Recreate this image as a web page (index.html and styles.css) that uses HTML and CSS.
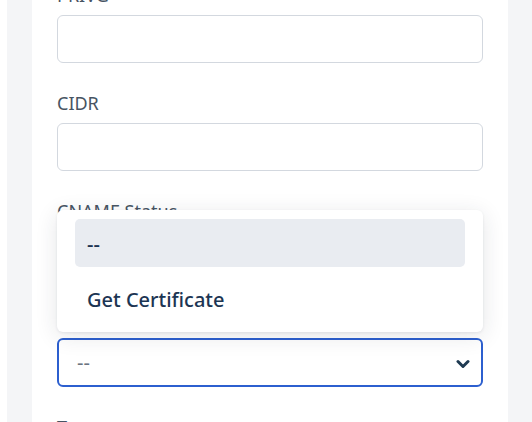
FILE: index.html
```html
<!DOCTYPE html>
<html>
<head>
<meta charset="utf-8">
<link rel="stylesheet" href="styles.css">
</head>
<body>
<div class="page">
  <div class="card">
    <form class="form">
      <div class="field">
        <label class="label">PRIVG</label>
        <div class="input"></div>
      </div>
      <div class="field">
        <label class="label">CIDR</label>
        <div class="input"></div>
      </div>
      <div class="field">
        <label class="label">CNAME Status</label>
        <div class="select-wrap">
          <div class="menu">
            <div class="option active">--</div>
            <div class="option">Get Certificate</div>
          </div>
          <div class="select">
            <span class="select-value">--</span>
            <svg class="chevron" width="14" height="10" viewBox="0 0 14 10"><path d="M2 2.5 L7 7.5 L12 2.5" fill="none" stroke="#1e3a52" stroke-width="3" stroke-linecap="round" stroke-linejoin="round"/></svg>
          </div>
        </div>
      </div>
      <div class="field">
        <label class="label">Type</label>
        <div class="input"></div>
      </div>
    </form>
  </div>
</div>
</body>
</html>
```

FILE: styles.css
```css
html, body {
  margin: 0;
  padding: 0;
  background: #ffffff;
  height: 422px;
  overflow: hidden;
}
.page {
  margin-left: 7px;
  background: #f4f5f7;
  padding: 0 24px 0 25px;
  height: 422px;
}
.card {
  background: #ffffff;
  padding: 0 25px;
  height: 100%;
  overflow: hidden;
}
.form {
  display: flex;
  flex-direction: column;
  gap: 28px;
  margin-top: -17px;
  font-family: "Noto Sans", "Open Sans", sans-serif;
}
.field {
  display: flex;
  flex-direction: column;
  gap: 8px;
}
.label {
  font-size: 18px;
  line-height: 24px;
  color: #475463;
}
.input {
  height: 46px;
  border: 1px solid #d3d8df;
  border-radius: 6px;
  background: #fff;
}
.select-wrap {
  position: relative;
  margin-top: 107px;
}
.select {
  height: 45px;
  border: 2px solid #2c5fcf;
  border-radius: 6px;
  display: flex;
  align-items: center;
  justify-content: space-between;
  padding: 0 11px 0 18px;
  background: #fff;
}
.select-value {
  color: #6b7480;
  font-size: 20px;
}
.chevron {
  display: block;
  margin-top: 2px;
}
.menu {
  position: absolute;
  left: 0;
  right: 0;
  bottom: calc(100% + 6px);
  background: #ffffff;
  border-radius: 6px;
  padding: 9px 18px;
  display: flex;
  flex-direction: column;
  gap: 8px;
  box-shadow: 0 4px 22px rgba(30, 40, 60, 0.12), 0 1px 3px rgba(30, 40, 60, 0.08);
  z-index: 2;
}
.option {
  height: 48px;
  display: flex;
  align-items: center;
  padding: 0 12px;
  border-radius: 5px;
  font-size: 20px;
  font-weight: 500;
  color: #1c3553;
}
.option.active {
  background: #e9ecf1;
}
```
